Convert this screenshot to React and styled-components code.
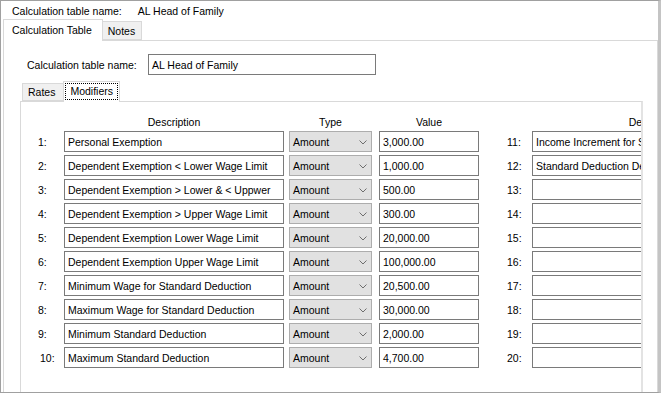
import React from "react";
import styled, { createGlobalStyle } from "styled-components";

const Global = createGlobalStyle`
  html, body { margin: 0; padding: 0; background: #ffffff; }
  body { font-family: "Liberation Sans", Arial, sans-serif; font-size: 10.5px; color: #000; }
  * { box-sizing: border-box; }
`;

const Window = styled.div`
  width: 661px;
  height: 393px;
  background: #fff;
  border-top: 1px solid #a0a0a0;
  border-left: 1px solid #a0a0a0;
  border-bottom: 1px solid #a0a0a0;
  border-right: 3px solid #c4c4c4;
  display: flex;
  flex-direction: column;
  overflow: hidden;
`;

const Header = styled.div`
  height: 19px;
  display: flex;
  align-items: center;
  gap: 16px;
  padding-left: 11px;
  padding-top: 1px;
`;

const TabStrip = styled.div`
  display: flex;
  align-items: flex-end;
  padding-left: ${(p) => p.$pad}px;
  height: ${(p) => p.$h}px;
  position: relative;
  z-index: 1;
`;

const Tab = styled.div`
  height: ${(p) => (p.$active ? p.$h + 2 : p.$h - 1)}px;
  margin-bottom: ${(p) => (p.$active ? -1 : 0)}px;
  padding: 0 ${(p) => p.$pr}px 0 ${(p) => p.$pl}px;
  display: flex;
  align-items: center;
  border: 1px solid #d9d9d9;
  border-bottom: ${(p) => (p.$active ? "none" : "1px solid #d9d9d9")};
  background: ${(p) => (p.$active ? "#ffffff" : "#f0f0f0")};
  margin-left: ${(p) => (p.$first ? 0 : -1)}px;
  padding-bottom: ${(p) => (p.$active ? 2 : 0)}px;
`;

const Focus = styled.span`
  outline: 1px dotted #000;
  outline-offset: 0px;
  padding: 1px 4px 2px;
`;

const OuterPanel = styled.div`
  flex: 1;
  margin-left: 2px;
  border: 1px solid #d9d9d9;
  border-bottom: none;
  display: flex;
  flex-direction: column;
  overflow: hidden;
`;

const NameRow = styled.div`
  display: flex;
  align-items: center;
  padding: 13px 0 0 23px;
  height: 34px;
`;

const NameLabel = styled.span`
  width: 121px;
`;

const TextBox = styled.div`
  width: ${(p) => p.$w}px;
  height: 21px;
  border: 1px solid #7a7a7a;
  background: #fff;
  padding: 0 3px;
  display: flex;
  align-items: center;
  white-space: nowrap;
  overflow: hidden;
  flex-shrink: 0;
`;

const InnerArea = styled.div`
  padding: 6px 14px 0 16px;
  display: flex;
  flex-direction: column;
  flex: 1;
`;

const InnerPanel = styled.div`
  flex: 1;
  border: 1px solid #d9d9d9;
  border-right: 2px solid #e3e3e3;
  border-bottom: none;
  overflow: hidden;
  padding: 14px 0 0 17px;
`;

const Grid = styled.div`
  display: grid;
  grid-template-columns: 26px 220px 88px 107px 28px 25px 246px;
  row-gap: 3px;
  width: 740px;
`;

const HeadCell = styled.div`
  text-align: center;
  height: 12px;
  line-height: 12px;
  margin-left: ${(p) => p.$ml || 0}px;
  white-space: nowrap;
`;

const Num = styled.div`
  display: flex;
  align-items: center;
  padding-left: ${(p) => p.$pl}px;
  height: 21px;
`;

const Select = styled.div`
  width: 83px;
  height: 21px;
  margin-left: 5px;
  border: 1px solid #adadad;
  background: #e1e1e1;
  display: flex;
  align-items: center;
  justify-content: space-between;
  padding: 1px 4px 0 3px;
`;

const ValueCell = styled.div`
  margin-left: 7px;
`;

const Chevron = () => (
  <svg width="8" height="5" viewBox="0 0 8 5">
    <path d="M0.5 0.5 L4 4 L7.5 0.5" fill="none" stroke="#6e6e6e" strokeWidth="1" />
  </svg>
);

const left = [
  ["Personal Exemption", "3,000.00"],
  ["Dependent Exemption < Lower Wage Limit", "1,000.00"],
  ["Dependent Exemption > Lower & < Uppwer", "500.00"],
  ["Dependent Exemption > Upper Wage Limit", "300.00"],
  ["Dependent Exemption Lower Wage Limit", "20,000.00"],
  ["Dependent Exemption Upper Wage Limit", "100,000.00"],
  ["Minimum Wage for Standard Deduction", "20,500.00"],
  ["Maximum Wage for Standard Deduction", "30,000.00"],
  ["Minimum Standard Deduction", "2,000.00"],
  ["Maximum Standard Deduction", "4,700.00"],
];

const right = ["Income Increment for Standard Deduction", "Standard Deduction Decrement", "", "", "", "", "", "", "", ""];

export default function App() {
  return (
    <>
      <Global />
      <Window>
        <Header>
          <span>Calculation table name:</span>
          <span>AL Head of Family</span>
        </Header>
        <TabStrip $pad={2} $h={20}>
          <Tab $active $first $h={20} $pl={8} $pr={10}>Calculation Table</Tab>
          <Tab $h={20} $pl={5} $pr={6}>Notes</Tab>
        </TabStrip>
        <OuterPanel>
          <NameRow>
            <NameLabel>Calculation table name:</NameLabel>
            <TextBox $w={228}>AL Head of Family</TextBox>
          </NameRow>
          <InnerArea>
            <TabStrip $pad={2} $h={20}>
              <Tab $first $h={19} $pl={5} $pr={8}>Rates</Tab>
              <Tab $active $h={19} $pl={2} $pr={2}><Focus>Modifiers</Focus></Tab>
            </TabStrip>
            <InnerPanel>
              <Grid>
                <div />
                <HeadCell>Description</HeadCell>
                <HeadCell $ml={5}>Type</HeadCell>
                <HeadCell $ml={7}>Value</HeadCell>
                <div />
                <div />
                <HeadCell>Description</HeadCell>
                {left.map(([d, v], i) => (
                  <React.Fragment key={i}>
                    <Num $pl={i === 9 ? 2 : 0}>{i + 1}:</Num>
                    <TextBox $w={220}>{d}</TextBox>
                    <Select>
                      <span>Amount</span>
                      <Chevron />
                    </Select>
                    <ValueCell>
                      <TextBox $w={100}>{v}</TextBox>
                    </ValueCell>
                    <div />
                    <Num $pl={0}>{i + 11}:</Num>
                    <TextBox $w={246}>{right[i]}</TextBox>
                  </React.Fragment>
                ))}
              </Grid>
            </InnerPanel>
          </InnerArea>
        </OuterPanel>
      </Window>
    </>
  );
}
